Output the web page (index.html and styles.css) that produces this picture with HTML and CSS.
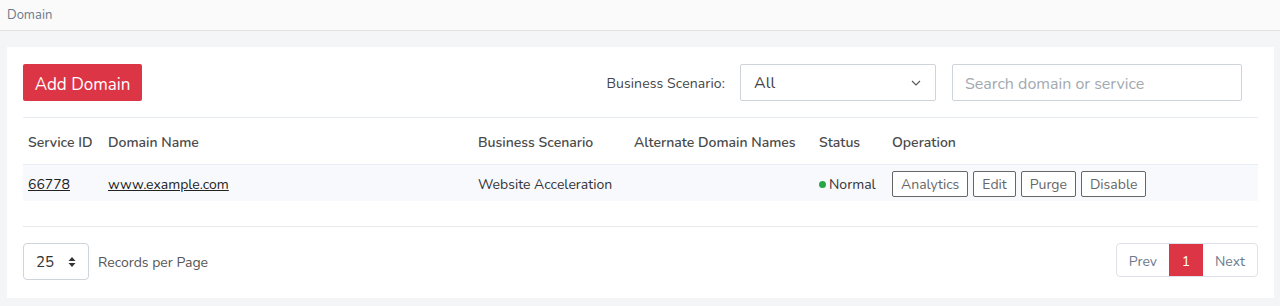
FILE: index.html
```html
<!DOCTYPE html>
<html>
<head>
<meta charset="utf-8">
<link rel="stylesheet" href="styles.css">
</head>
<body>
<div class="topbar"><span class="crumb">Domain</span></div>
<div class="main">
  <div class="card">
    <div class="toolbar">
      <button class="btn-add">Add Domain</button>
      <div class="filters">
        <span class="flabel">Business Scenario:</span>
        <div class="select">
          <span>All</span>
          <svg width="10" height="6" viewBox="0 0 10 6"><path d="M1 1l4 4 4-4" fill="none" stroke="#555" stroke-width="1.1"/></svg>
        </div>
        <div class="search">Search domain or service</div>
      </div>
    </div>
    <table class="grid">
      <colgroup>
        <col style="width:80px"><col style="width:370px"><col style="width:156px"><col style="width:185px"><col style="width:73px"><col>
      </colgroup>
      <thead>
        <tr><th>Service ID</th><th>Domain Name</th><th>Business Scenario</th><th>Alternate Domain Names</th><th>Status</th><th>Operation</th></tr>
      </thead>
      <tbody>
        <tr>
          <td><a class="lnk">66778</a></td>
          <td><a class="lnk">www.example.com</a></td>
          <td>Website Acceleration</td>
          <td></td>
          <td class="status"><span class="dot"></span>Normal</td>
          <td class="ops"><button class="op">Analytics</button><button class="op">Edit</button><button class="op">Purge</button><button class="op">Disable</button></td>
        </tr>
      </tbody>
    </table>
    <div class="footer">
      <div class="pagesize">
        <div class="psel"><span>25</span>
          <svg width="8" height="12" viewBox="0 0 8 12"><path d="M4 1L7.5 5H0.5Z M4 11L0.5 7H7.5Z" fill="#333"/></svg>
        </div>
        <span class="rpp">Records per Page</span>
      </div>
      <div class="pager">
        <span class="pg">Prev</span><span class="pg active">1</span><span class="pg">Next</span>
      </div>
    </div>
  </div>
</div>
</body>
</html>
```
FILE: styles.css
```css
* { box-sizing: border-box; }
body {
  margin: 0;
  background: #f4f5f7;
  font-family: "Nunito", "Lato", "Open Sans", sans-serif;
  color: #444;
}
.topbar {
  height: 31px;
  background: #fafafa;
  border-bottom: 1px solid #e1e1e1;
  padding: 3px 7px 0;
}
.crumb { font-size: 13px; color: #6b7a8c; }
.main { padding: 16px 6px 9px 7px; }
.card {
  background: #fff;
  padding: 17px 16px 16px 16px;
  height: 251px;
}
.toolbar {
  display: flex;
  justify-content: space-between;
  align-items: center;
  padding-right: 16px;
  padding-bottom: 16px;
  border-bottom: 1px solid #e8ecf5;
}
.btn-add {
  height: 37px;
  width: 119px;
  background: #dc3545;
  border: none;
  border-radius: 2px;
  color: #fff;
  font-family: inherit;
  font-size: 17px;
  padding: 3px 0 0;
}
.filters { display: flex; align-items: center; }
.flabel { font-size: 14px; color: #444; margin-right: 15px; padding-top: 2px; letter-spacing: 0.1px; }
.select {
  width: 196px; height: 37px;
  border: 1px solid #ced4da;
  border-radius: 2px;
  display: flex; align-items: center; justify-content: space-between;
  padding: 1px 14px 0 13px;
  font-size: 16px; color: #444;
  margin-right: 16px;
}
.search {
  width: 290px; height: 37px;
  border: 1px solid #ced4da;
  border-radius: 2px;
  display: flex; align-items: center;
  padding: 2px 12px 0;
  font-size: 16px; color: #a3a9b0;
}
.grid {
  width: 100%;
  border-collapse: collapse;
  table-layout: fixed;
}
.grid th {
  text-align: left;
  font-weight: 600;
  font-size: 14px;
  color: #4a4a4a;
  height: 46px;
  padding: 4px 5px 0;
  border-bottom: 1px solid #e8ecf5;
}
.grid td {
  height: 37px;
  padding: 3px 5px 0;
  font-size: 14px;
  color: #333;
  background: #f8f9fd;
}
.lnk { color: #222; text-decoration: underline; }
.status { white-space: nowrap; }
.dot {
  display: inline-block; width: 7px; height: 7px; border-radius: 50%;
  background: #28a745; margin-right: 3px; vertical-align: 1px;
}
.ops { white-space: nowrap; }
.op {
  height: 26px;
  background: #fff;
  border: 1px solid #666;
  border-radius: 2px;
  font-family: inherit;
  font-size: 14px;
  color: #666;
  padding: 1px 8px 0;
  margin-right: 5px;
}
.footer {
  margin-top: 25px;
  border-top: 1px solid #e9e9e9;
  padding-top: 16px;
  display: flex;
  justify-content: space-between;
  align-items: flex-start;
}
.pagesize { display: flex; align-items: center; }
.psel {
  width: 66px; height: 37px;
  border: 1px solid #ced4da; border-radius: 4px;
  display: flex; align-items: center; justify-content: space-between;
  padding: 1px 12px 0 12px;
  font-size: 15px; color: #333;
}
.rpp { margin-left: 9px; font-size: 14px; color: #555; padding-top: 2px; }
.pager {
  display: flex;
  border: 1px solid #dee2e6;
  border-radius: 4px;
  height: 34px;
  overflow: hidden;
}
.pg {
  display: flex; align-items: center; justify-content: center;
  font-size: 14px; color: #6b7a8c;
  padding: 2px 12px 0;
}
.pg.active { background: #dc3545; color: #fff; width: 34px; padding: 2px 0 0; }
```
